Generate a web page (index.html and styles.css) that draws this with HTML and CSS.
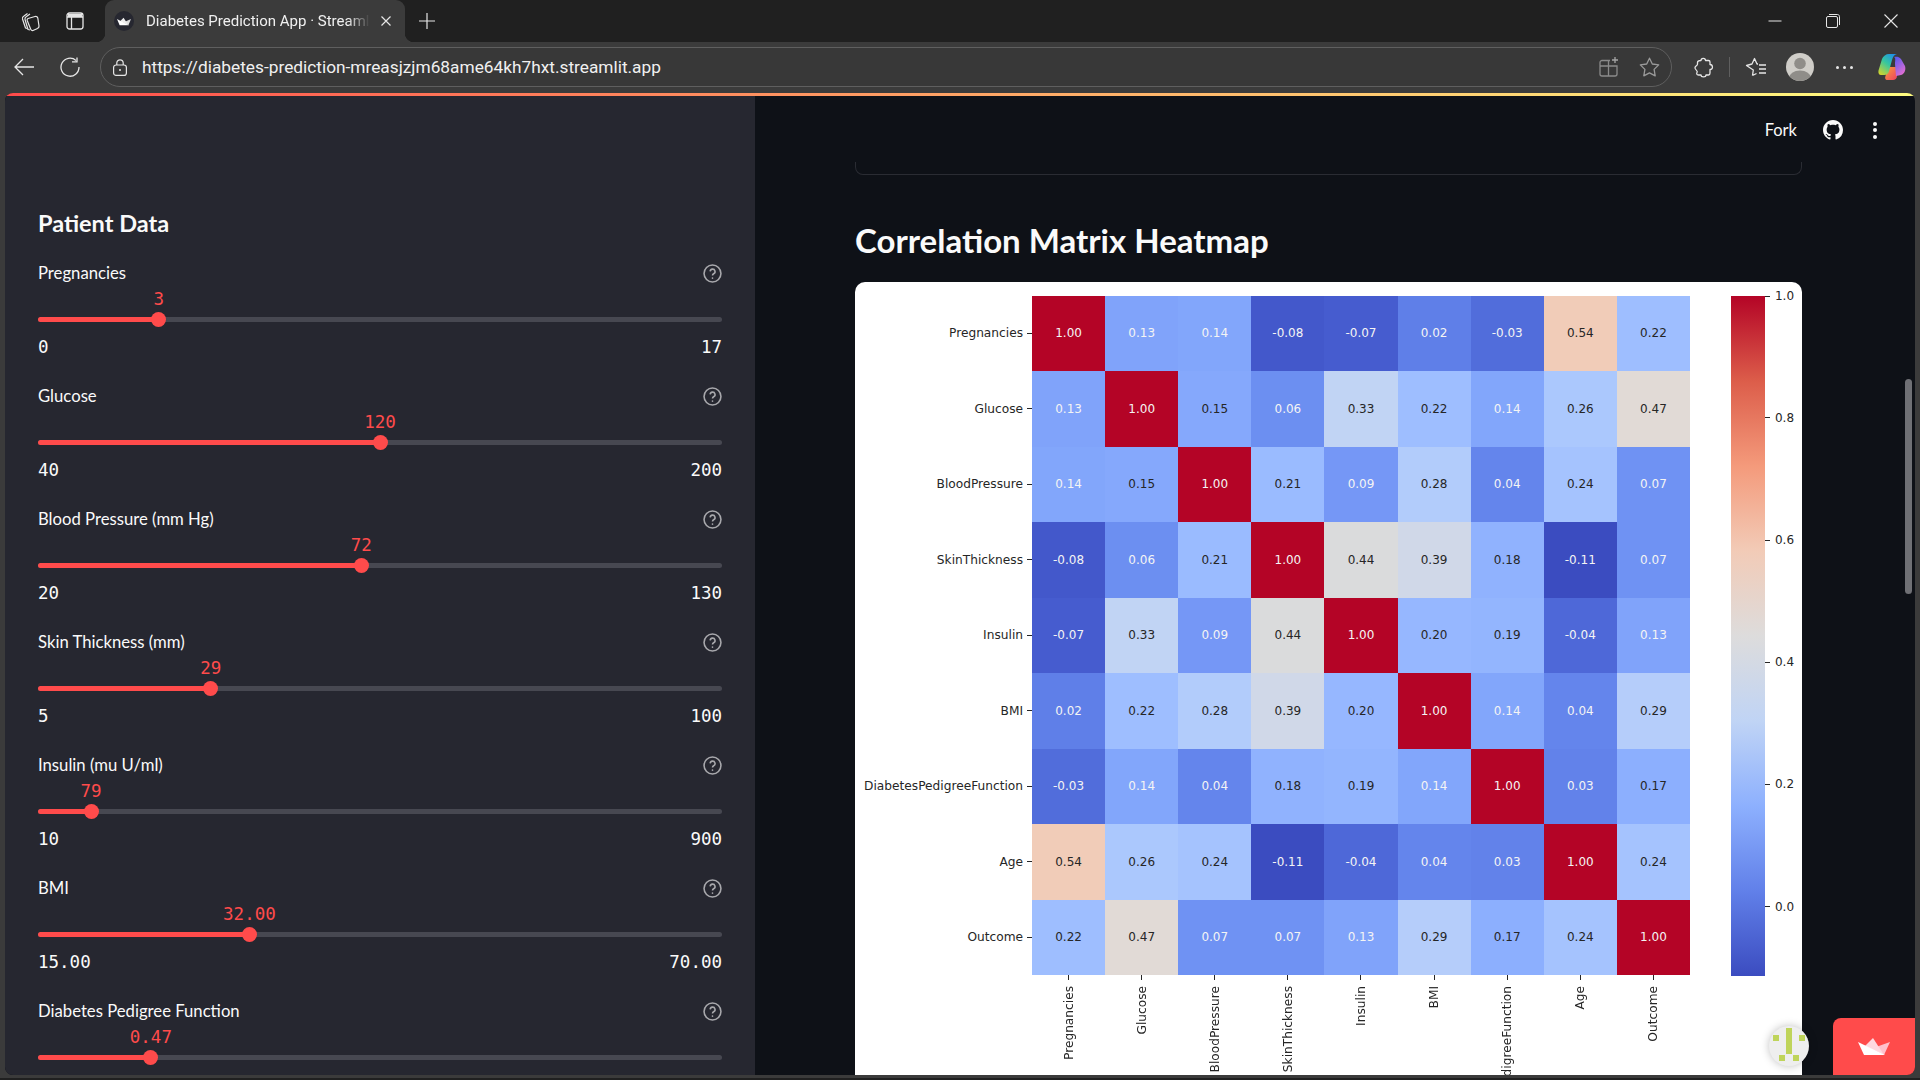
FILE: index.html
```html
<!DOCTYPE html>
<html lang="en">
<head>
	<meta charset="UTF-8">
	<title>Diabetes Prediction App · Streamlit</title>
	<link rel="stylesheet" href="styles.css">
</head>
<body>

	<!-- browser tabs -->
	<div class="tabstrip">
		<span class="chrome-icon first">
			<svg width="22" height="22" viewBox="0 0 22 22" fill="none" stroke="#e6e6e6" stroke-width="1.2" stroke-linejoin="round"><path d="M8 18.5 6.5 18 3.5 9C3 7 4 6.5 5 6L8.5 3.5"/><path d="M11 20 9 19.5 6 9.5C5.7 8 6.5 7 7.500 6.500L11 4"/><path d="M9 8.500 16 6.500C17.500 6.200 18.500 7 18.800 8L20 16C20.200 17.300 19.500 18 18.500 18.500L14 20.500C12.800 20.800 12 20.200 11.700 19.200L8.200 10.500C7.900 9.500 8.200 8.800 9 8.500Z"/></svg>
		</span>
		<span class="chrome-icon">
			<svg width="18" height="18" viewBox="0 0 18 18" fill="none" stroke="#e6e6e6" stroke-width="1.3"><rect x="1" y="1" width="16" height="16" rx="2.500"/><path d="M1 5H17M5.500 5V17"/><path d="M2 2H16V5H2Z" fill="#e6e6e6" stroke="none"/></svg>
		</span>
		<div class="tab">
			<span class="favicon">
				<svg width="14" height="9" viewBox="0 0 32 17"><path d="M32 3 26 17 18 9Z" fill="#ddd"/><path d="M15 0 26 17 7 8Z" fill="#eee"/><path d="M0 3 27 17H6Z" fill="#fff"/></svg>
			</span>
			<span class="tab-title">Diabetes Prediction App · Streamlit</span>
			<svg class="tab-close" width="10" height="10" viewBox="0 0 10 10" stroke="#e6e6e6" stroke-width="1.200"><path d="M.5.5l9 9M9.500.5l-9 9"/></svg>
		</div>
		<svg class="new-tab" width="18" height="18" viewBox="0 0 18 18" stroke="#e6e6e6" stroke-width="1.200"><path d="M9 1v16M1 9h16"/></svg>
		<div class="window-buttons">
			<svg width="14" height="14" viewBox="0 0 14 14" stroke="#e6e6e6"><path d="M.5 7h13"/></svg>
			<svg width="14" height="14" viewBox="0 0 14 14" fill="none" stroke="#e6e6e6"><rect x=".5" y="2.500" width="11" height="11" rx="1.500"/><path d="M3 .5h8.500c1 0 2 1 2 2V11"/></svg>
			<svg width="14" height="14" viewBox="0 0 14 14" stroke="#e6e6e6" stroke-width="1.100"><path d="M.5.5l13 13M13.500.5l-13 13"/></svg>
		</div>
	</div>

	<!-- address bar -->
	<div class="toolbar">
		<svg class="tool-back" width="20" height="18" viewBox="0 0 20 18" fill="none" stroke="#e6e6e6" stroke-width="1.300"><path d="M1 9H20M9 1 1 9l8 8"/></svg>
		<svg class="tool-reload" width="20" height="20" viewBox="0 0 20 20" fill="none" stroke="#e6e6e6" stroke-width="1.300"><path d="M16 3.500A9 9 0 1 0 19 10"/><path d="M12 4.800H17V.5"/></svg>
		<div class="omnibox">
			<svg class="lock" width="14" height="17" viewBox="0 0 14 17" fill="none" stroke="#e6e6e6" stroke-width="1.200"><rect x=".6" y="6" width="12.800" height="10.400" rx="2.500"/><path d="M3.800 6V4a3.200 3.200 0 0 1 6.400 0v2"/><circle cx="7" cy="11" r="1" fill="#e6e6e6" stroke="none"/></svg>
			<span class="url">https://diabetes-prediction-mreasjzjm68ame64kh7hxt.streamlit.app</span>
			<svg class="omni-split" width="20" height="20" viewBox="0 0 20 20" fill="none" stroke="#8a8a8a" stroke-width="1.300"><path d="M11 3.500H3a2 2 0 0 0-2 2V17a2 2 0 0 0 2 2h13a2 2 0 0 0 2-2V9H1M9.500 3.500V19"/><path d="M16 0v6M13 3h6" stroke="#a5a5a5"/></svg>
			<svg class="omni-star" width="21" height="20" viewBox="0 0 21 20" fill="none" stroke="#9a9a9a" stroke-width="1.300" stroke-linejoin="round"><path d="M10.500 1.200 13.300 7l6.400.9-4.600 4.500 1.100 6.400-5.700-3-5.700 3 1.100-6.400L1.300 7.900 7.700 7Z"/></svg>
		</div>
		<svg class="tool-puzzle" width="20" height="21" viewBox="0 0 20 21" fill="none" stroke="#e6e6e6" stroke-width="1.300" stroke-linejoin="round"><path d="M7 3.500C7 1 11.500.500 11.500 3.500H14.500C15.500 3.500 16 4 16 5V7.500C19 7.500 19.500 12.500 16 12.500V16C16 17 15.500 18 14.500 18H12C12 20.500 7 20.500 7 18H4.500C2.500 18 2.500 16.500 3 15.500 4.500 13.500 .5 13 1 10.500 1.500 8.500 3.500 9 3.500 7V5.500C3.500 4 5 3.500 7 3.500Z"/></svg>
		<span class="tool-divider"></span>
		<svg class="tool-favs" width="21" height="20" viewBox="0 0 21 20" fill="none" stroke="#e6e6e6" stroke-width="1.300" stroke-linejoin="round"><path d="M7.500 18.500 8.300 13 1.500 8.500 7 7 9.500 1.500 12 7H13M7.500 18.500 11.500 16.500"/><path d="M14 8h7M14 12h7M14 16h7"/></svg>
		<svg class="tool-avatar" width="28" height="28" viewBox="0 0 28 28"><clipPath id="avatar-clip"><circle cx="14" cy="14" r="14"/></clipPath><g clip-path="url(#avatar-clip)"><rect width="28" height="28" fill="#cfcdc8"/><circle cx="14" cy="10.500" r="5.800" fill="#8f8d89"/><ellipse cx="14" cy="25" rx="11" ry="7.500" fill="#8f8d89"/></g></svg>
		<span class="tool-dots"><i></i><i></i><i></i></span>
		<svg class="tool-copilot" width="28" height="28" viewBox="0 0 28 28">
			<defs>
				<linearGradient id="cop-left" x1="0.800" y1="0" x2="0.100" y2="1"><stop offset="0" stop-color="#1f8fe8"/><stop offset=".45" stop-color="#35c6a0"/><stop offset="1" stop-color="#d6d52a"/></linearGradient>
				<linearGradient id="cop-right" x1="0.200" y1="0" x2="0.800" y2="1"><stop offset="0" stop-color="#5b5bf0"/><stop offset="1" stop-color="#ec6fd0"/></linearGradient>
				<linearGradient id="cop-low" x1="0" y1="0" x2="1" y2="1"><stop offset="0" stop-color="#f7a23a"/><stop offset="1" stop-color="#ee3f62"/></linearGradient>
			</defs>
			<path d="M10 14H18L19 23C19 25.500 17 27 15 27H9C7.500 27 6.500 25 7.500 23Z" fill="url(#cop-low)"/>
			<path d="M16 4C18 3.500 21 3.500 23 6L27 13C28 16 27 21 23 22L18 23 17 11C17 8 18 5 16 4Z" fill="url(#cop-right)"/>
			<path d="M11 1H19C16 1.500 15 4 14 7L11 18C10.500 20.500 8.500 22 6.500 22H3C1 22 0 20 .5 17.500L4 6C5 3 8 1 11 1Z" fill="url(#cop-left)"/>
		</svg>
	</div>

	<!-- streamlit app -->
	<div class="app-frame">
		<div class="app">
			<div class="decoration"></div>
			<div class="app-body">

				<aside class="sidebar">
					<h2 class="sidebar-title">Patient Data</h2>

					<div class="slider">
						<div class="slider-label"><span>Pregnancies</span><svg class="help" viewBox="0 0 18 18"><circle cx="9" cy="9" r="8"/><path d="M6.800 7a2.300 2.300 0 1 1 3.300 2.200C9.300 9.700 9 10 9 11"/><circle class="help-dot" cx="9" cy="13.300" r=".8"/></svg></div>
						<div class="track"><div class="fill" style="width:17.65%"><span class="thumb"><span class="thumb-value">3</span></span></div></div>
						<div class="slider-range"><span>0</span><span>17</span></div>
					</div>

					<div class="slider">
						<div class="slider-label"><span>Glucose</span><svg class="help" viewBox="0 0 18 18"><circle cx="9" cy="9" r="8"/><path d="M6.800 7a2.300 2.300 0 1 1 3.300 2.200C9.300 9.700 9 10 9 11"/><circle class="help-dot" cx="9" cy="13.300" r=".8"/></svg></div>
						<div class="track"><div class="fill" style="width:50%"><span class="thumb"><span class="thumb-value">120</span></span></div></div>
						<div class="slider-range"><span>40</span><span>200</span></div>
					</div>

					<div class="slider">
						<div class="slider-label"><span>Blood Pressure (mm Hg)</span><svg class="help" viewBox="0 0 18 18"><circle cx="9" cy="9" r="8"/><path d="M6.800 7a2.300 2.300 0 1 1 3.300 2.200C9.300 9.700 9 10 9 11"/><circle class="help-dot" cx="9" cy="13.300" r=".8"/></svg></div>
						<div class="track"><div class="fill" style="width:47.27%"><span class="thumb"><span class="thumb-value">72</span></span></div></div>
						<div class="slider-range"><span>20</span><span>130</span></div>
					</div>

					<div class="slider">
						<div class="slider-label"><span>Skin Thickness (mm)</span><svg class="help" viewBox="0 0 18 18"><circle cx="9" cy="9" r="8"/><path d="M6.800 7a2.300 2.300 0 1 1 3.300 2.200C9.300 9.700 9 10 9 11"/><circle class="help-dot" cx="9" cy="13.300" r=".8"/></svg></div>
						<div class="track"><div class="fill" style="width:25.26%"><span class="thumb"><span class="thumb-value">29</span></span></div></div>
						<div class="slider-range"><span>5</span><span>100</span></div>
					</div>

					<div class="slider">
						<div class="slider-label"><span>Insulin (mu U/ml)</span><svg class="help" viewBox="0 0 18 18"><circle cx="9" cy="9" r="8"/><path d="M6.800 7a2.300 2.300 0 1 1 3.300 2.200C9.300 9.700 9 10 9 11"/><circle class="help-dot" cx="9" cy="13.300" r=".8"/></svg></div>
						<div class="track"><div class="fill" style="width:7.75%"><span class="thumb"><span class="thumb-value">79</span></span></div></div>
						<div class="slider-range"><span>10</span><span>900</span></div>
					</div>

					<div class="slider">
						<div class="slider-label"><span>BMI</span><svg class="help" viewBox="0 0 18 18"><circle cx="9" cy="9" r="8"/><path d="M6.800 7a2.300 2.300 0 1 1 3.300 2.200C9.300 9.700 9 10 9 11"/><circle class="help-dot" cx="9" cy="13.300" r=".8"/></svg></div>
						<div class="track"><div class="fill" style="width:30.91%"><span class="thumb"><span class="thumb-value">32.00</span></span></div></div>
						<div class="slider-range"><span>15.00</span><span>70.00</span></div>
					</div>

					<div class="slider">
						<div class="slider-label"><span>Diabetes Pedigree Function</span><svg class="help" viewBox="0 0 18 18"><circle cx="9" cy="9" r="8"/><path d="M6.800 7a2.300 2.300 0 1 1 3.300 2.200C9.300 9.700 9 10 9 11"/><circle class="help-dot" cx="9" cy="13.300" r=".8"/></svg></div>
						<div class="track"><div class="fill" style="width:16.5%"><span class="thumb"><span class="thumb-value">0.47</span></span></div></div>
					</div>
				</aside>

				<main class="main">
					<div class="prev-card"></div>
					<h2 class="main-title">Correlation Matrix Heatmap</h2>

					<div class="chart">
						<div class="heatmap">
							<div class="ylabel">Pregnancies</div>
							<div class="cell v100">1.00</div><div class="cell v013">0.13</div><div class="cell v014">0.14</div><div class="cell n008">-0.08</div><div class="cell n007">-0.07</div><div class="cell v002">0.02</div><div class="cell n003">-0.03</div><div class="cell v054">0.54</div><div class="cell v022">0.22</div>
							<div class="ylabel">Glucose</div>
							<div class="cell v013">0.13</div><div class="cell v100">1.00</div><div class="cell v015">0.15</div><div class="cell v006">0.06</div><div class="cell v033">0.33</div><div class="cell v022">0.22</div><div class="cell v014">0.14</div><div class="cell v026">0.26</div><div class="cell v047">0.47</div>
							<div class="ylabel">BloodPressure</div>
							<div class="cell v014">0.14</div><div class="cell v015">0.15</div><div class="cell v100">1.00</div><div class="cell v021">0.21</div><div class="cell v009">0.09</div><div class="cell v028">0.28</div><div class="cell v004">0.04</div><div class="cell v024">0.24</div><div class="cell v007">0.07</div>
							<div class="ylabel">SkinThickness</div>
							<div class="cell n008">-0.08</div><div class="cell v006">0.06</div><div class="cell v021">0.21</div><div class="cell v100">1.00</div><div class="cell v044">0.44</div><div class="cell v039">0.39</div><div class="cell v018">0.18</div><div class="cell n011">-0.11</div><div class="cell v007">0.07</div>
							<div class="ylabel">Insulin</div>
							<div class="cell n007">-0.07</div><div class="cell v033">0.33</div><div class="cell v009">0.09</div><div class="cell v044">0.44</div><div class="cell v100">1.00</div><div class="cell v020">0.20</div><div class="cell v019">0.19</div><div class="cell n004">-0.04</div><div class="cell v013">0.13</div>
							<div class="ylabel">BMI</div>
							<div class="cell v002">0.02</div><div class="cell v022">0.22</div><div class="cell v028">0.28</div><div class="cell v039">0.39</div><div class="cell v020">0.20</div><div class="cell v100">1.00</div><div class="cell v014">0.14</div><div class="cell v004">0.04</div><div class="cell v029">0.29</div>
							<div class="ylabel">DiabetesPedigreeFunction</div>
							<div class="cell n003">-0.03</div><div class="cell v014">0.14</div><div class="cell v004">0.04</div><div class="cell v018">0.18</div><div class="cell v019">0.19</div><div class="cell v014">0.14</div><div class="cell v100">1.00</div><div class="cell v003">0.03</div><div class="cell v017">0.17</div>
							<div class="ylabel">Age</div>
							<div class="cell v054">0.54</div><div class="cell v026">0.26</div><div class="cell v024">0.24</div><div class="cell n011">-0.11</div><div class="cell n004">-0.04</div><div class="cell v004">0.04</div><div class="cell v003">0.03</div><div class="cell v100">1.00</div><div class="cell v024">0.24</div>
							<div class="ylabel">Outcome</div>
							<div class="cell v022">0.22</div><div class="cell v047">0.47</div><div class="cell v007">0.07</div><div class="cell v007">0.07</div><div class="cell v013">0.13</div><div class="cell v029">0.29</div><div class="cell v017">0.17</div><div class="cell v024">0.24</div><div class="cell v100">1.00</div>

							<div></div>
							<div class="xlabel"><span>Pregnancies</span></div>
							<div class="xlabel"><span>Glucose</span></div>
							<div class="xlabel"><span>BloodPressure</span></div>
							<div class="xlabel"><span>SkinThickness</span></div>
							<div class="xlabel"><span>Insulin</span></div>
							<div class="xlabel"><span>BMI</span></div>
							<div class="xlabel"><span>DiabetesPedigreeFunction</span></div>
							<div class="xlabel"><span>Age</span></div>
							<div class="xlabel"><span>Outcome</span></div>
						</div>

						<div class="colorbar">
							<span class="cb-tick" style="top:0.5px">1.0</span>
							<span class="cb-tick" style="top:122px">0.8</span>
							<span class="cb-tick" style="top:244.5px">0.6</span>
							<span class="cb-tick" style="top:366.5px">0.4</span>
							<span class="cb-tick" style="top:488.5px">0.2</span>
							<span class="cb-tick" style="top:611px">0.0</span>
						</div>
					</div>
				</main>

			</div>

			<!-- things that float over the app -->
			<div class="st-header">
				<span class="fork">Fork</span>
				<svg class="github" width="20" height="20" viewBox="0 0 16 16" fill="#fafafa"><path d="M8 0C3.58 0 0 3.58 0 8c0 3.54 2.29 6.53 5.47 7.59.4.07.55-.17.55-.38 0-.19-.01-.82-.01-1.49-2.01.37-2.53-.49-2.69-.94-.09-.23-.48-.94-.82-1.13-.28-.15-.68-.52-.01-.53.63-.01 1.08.58 1.23.82.72 1.21 1.87.87 2.33.66.07-.52.28-.87.51-1.07-1.78-.2-3.64-.89-3.64-3.95 0-.87.31-1.59.82-2.15-.08-.2-.36-1.02.08-2.12 0 0 .67-.21 2.2.82.64-.18 1.32-.27 2-.27.68 0 1.36.09 2 .27 1.53-1.04 2.2-.82 2.2-.82.44 1.1.16 1.92.08 2.12.51.56.82 1.27.82 2.15 0 3.07-1.87 3.75-3.65 3.95.29.25.54.73.54 1.48 0 1.07-.01 1.93-.01 2.2 0 .21.15.46.55.38A8.013 8.013 0 0016 8c0-4.42-3.58-8-8-8z"/></svg>
				<span class="kebab"><i></i><i></i><i></i></span>
			</div>
			<div class="scrollbar"></div>
			<div class="viewer-badge">
				<svg width="40" height="40" viewBox="0 0 40 40" fill="#bfd45a"><rect x="17" y="2" width="6" height="26"/><rect x="4" y="9" width="6" height="6"/><rect x="30" y="9" width="6" height="6"/><rect x="10" y="29" width="6" height="6"/><rect x="24" y="29" width="6" height="6"/></svg>
			</div>
			<div class="hosted">
				<svg width="32" height="17" viewBox="0 0 32 17"><path d="M32 4 26 17 18 9Z" fill="#ffc0cc"/><path d="M15 0 26 17 7 8Z" fill="#ffd9e0"/><path d="M0 4 27 17H6Z" fill="#fff"/></svg>
			</div>
		</div>
	</div>
	<div class="window-bottom"></div>

</body>
</html>
```

FILE: styles.css
```css
html, body {
	margin: 0;
	padding: 0;
	height: 100%;
	overflow: hidden;
	background: #3b3b3b;
}

body {
	display: flex;
	flex-direction: column;
	font-family: "Roboto", "Liberation Sans", sans-serif;
}

/* Browser tabs */

.tabstrip {
	display: flex;
	align-items: center;
	height: 42px;
	flex: none;
	background: #202020;
}

.chrome-icon {
	display: flex;
	width: 22px;
	height: 22px;
	align-items: center;
	justify-content: center;
	margin-left: 23px;
}

.chrome-icon.first {
	margin-left: 19px;
}

.tab {
	position: relative;
	display: flex;
	align-items: center;
	align-self: stretch;
	width: 300px;
	margin-left: 19px;
	padding-left: 9px;
	box-sizing: border-box;
	background: #3b3b3b;
	border-top-left-radius: 9px;
	border-top-right-radius: 9px;
}

.tab::before,
.tab::after {
	content: "";
	position: absolute;
	bottom: 0;
	width: 9px;
	height: 9px;
}

.tab::before {
	left: -9px;
	background: radial-gradient(circle at 0 0, transparent 9px, #3b3b3b 9.5px);
}

.tab::after {
	right: -9px;
	background: radial-gradient(circle at 100% 0, transparent 9px, #3b3b3b 9.5px);
}

.favicon {
	display: flex;
	width: 20px;
	height: 20px;
	align-items: center;
	justify-content: center;
	border-radius: 50%;
	background: #262730;
	flex: none;
}

.tab-title {
	width: 224px;
	margin-left: 12px;
	overflow: hidden;
	white-space: nowrap;
	font-size: 15px;
	color: #f0f0f0;
	-webkit-mask-image: linear-gradient(90deg, #000 90%, transparent);
	mask-image: linear-gradient(90deg, #000 90%, transparent);
}

.tab-close {
	margin-left: 11px;
}

.new-tab {
	margin-left: 13px;
}

.window-buttons {
	display: flex;
	gap: 44px;
	margin-left: auto;
	margin-right: 22px;
}

/* Address bar */

.toolbar {
	display: flex;
	align-items: center;
	height: 51px;
	flex: none;
	background: #3b3b3b;
	padding-bottom: 1px;
	box-sizing: border-box;
}

.tool-back {
	margin-left: 14px;
}

.tool-reload {
	margin-left: 26px;
}

.omnibox {
	display: flex;
	align-items: center;
	width: 1572px;
	height: 40px;
	margin-left: 20px;
	box-sizing: border-box;
	border: 1px solid #5f5f5f;
	border-radius: 20px;
	background: #383838;
}

.lock {
	margin-left: 12px;
}

.url {
	margin-left: 15px;
	font-size: 17.3px;
	color: #f0f0f0;
	white-space: nowrap;
}

.omni-split {
	margin-left: auto;
}

.omni-star {
	margin-left: 20px;
	margin-right: 11px;
}

.tool-puzzle {
	margin-left: 22px;
}

.tool-divider {
	width: 1px;
	height: 20px;
	margin-left: 15px;
	background: #5f5f5f;
}

.tool-favs {
	margin-left: 15px;
}

.tool-avatar {
	margin-left: 20px;
}

.tool-dots {
	display: flex;
	gap: 4px;
	margin-left: 22px;
}

.tool-dots i {
	width: 3px;
	height: 3px;
	border-radius: 50%;
	background: #e6e6e6;
}

.tool-copilot {
	margin-left: 25px;
}

/* The app itself */

.app-frame {
	flex: 1;
	min-height: 0;
	padding: 0 5px 3px 5px;
}

.app {
	position: relative;
	display: flex;
	flex-direction: column;
	height: 100%;
	overflow: hidden;
	border-radius: 8px;
	background: #0e1117;
}

.window-bottom {
	height: 2px;
	flex: none;
	background: #202020;
}

.decoration {
	height: 3px;
	flex: none;
	background: linear-gradient(90deg, rgb(255, 75, 75), rgb(255, 253, 128));
}

.app-body {
	display: flex;
	flex: 1;
	min-height: 0;
}

/* Sidebar */

.sidebar {
	width: 750px;
	flex: none;
	box-sizing: border-box;
	padding: 111px 33px 0;
	overflow: hidden;
	background: #262730;
	color: #fafafa;
	font-family: "Lato", "Noto Sans", sans-serif;
}

.sidebar-title {
	margin: 0 0 22px;
	font-size: 23.5px;
	font-weight: 700;
	line-height: 32px;
}

.slider {
	height: 123px;
	box-sizing: border-box;
}

.slider-label {
	display: flex;
	align-items: center;
	justify-content: space-between;
	height: 24px;
	font-size: 16.7px;
	margin-bottom: 32px;
}

.help {
	width: 19px;
	height: 19px;
	fill: none;
	stroke: #a8a8ac;
	stroke-width: 1.500;
}

.help-dot {
	fill: #a8a8ac;
	stroke: none;
}

.track {
	height: 5px;
	border-radius: 3px;
	background: #474851;
}

.fill {
	position: relative;
	height: 100%;
	border-radius: 3px;
	background: #ff4b4b;
}

.thumb {
	position: absolute;
	right: -7.5px;
	top: -5px;
	width: 15px;
	height: 15px;
	border-radius: 50%;
	background: #ff4b4b;
}

.thumb-value {
	position: absolute;
	left: 50%;
	bottom: 17px;
	transform: translateX(-50%);
	font: 17.5px/22px "DejaVu Sans Mono", monospace;
	color: #ff4b4b;
}

.slider-range {
	display: flex;
	justify-content: space-between;
	margin-top: 14px;
	font: 17.5px/22px "DejaVu Sans Mono", monospace;
}

/* Main column */

.main {
	flex: 1;
	min-width: 0;
	padding: 66px 113px 0 100px;
	overflow: hidden;
}

.prev-card {
	height: 12px;
	border: 1px solid #2a2c33;
	border-top: none;
	border-radius: 0 0 8px 8px;
}

.main-title {
	margin: 42px 0 0;
	font-size: 33px;
	font-weight: 700;
	line-height: 46px;
	color: #fafafa;
	font-family: "Lato", "Noto Sans", sans-serif;
}

.chart {
	display: flex;
	align-items: flex-start;
	margin-top: 19px;
	padding-top: 13.5px;
	border-radius: 10px;
	background: #fff;
	font-family: "DejaVu Sans", sans-serif;
	color: #262626;
}

.heatmap {
	display: grid;
	grid-template-columns: 177px repeat(9, 73.12px);
	grid-template-rows: repeat(9, 75.5px) auto;
}

.ylabel {
	display: flex;
	align-items: center;
	justify-content: flex-end;
	font-size: 12.2px;
	white-space: nowrap;
}

.ylabel::after {
	content: "";
	width: 5px;
	height: 1px;
	margin-left: 4px;
	background: #262626;
}

.xlabel {
	display: flex;
	flex-direction: column;
	align-items: center;
	height: 240px;
	font-size: 12.2px;
}

.xlabel::before {
	content: "";
	width: 1px;
	height: 5px;
	margin-bottom: 6px;
	background: #262626;
}

.xlabel span {
	writing-mode: vertical-rl;
	transform: rotate(180deg);
	white-space: nowrap;
}

.cell {
	display: flex;
	align-items: center;
	justify-content: center;
	font-size: 12px;
	color: #262626;
}

/* Cell colours, named after the value they show */

.n011, .n008, .n007, .n004, .n003, .v002, .v003, .v004, .v006, .v007, .v009,
.v013, .v014, .v100 {
	color: #f4f4f4;
}

.n011 { background: #3b4cc0; }
.n008 { background: #4358cb; }
.n007 { background: #465ccf; }
.n004 { background: #4e68d8; }
.n003 { background: #516ddb; }
.v002 { background: #5f7fe8; }
.v003 { background: #6282ea; }
.v004 { background: #6485ec; }
.v006 { background: #6c8ff1; }
.v007 { background: #6f92f3; }
.v009 { background: #7597f6; }
.v013 { background: #80a3fa; }
.v014 { background: #82a6fb; }
.v015 { background: #85a8fc; }
.v017 { background: #8caffe; }
.v018 { background: #90b2fe; }
.v019 { background: #93b5fe; }
.v020 { background: #96b7ff; }
.v021 { background: #9abbff; }
.v022 { background: #9ebeff; }
.v024 { background: #a5c3fe; }
.v026 { background: #abc8fd; }
.v028 { background: #b2ccfb; }
.v029 { background: #b5cdfa; }
.v033 { background: #c1d4f4; }
.v039 { background: #d0d8e8; }
.v044 { background: #dadbdc; }
.v047 { background: #e1dad6; }
.v054 { background: #f1ccb8; }
.v100 { background: #b40426; }

.colorbar {
	position: relative;
	width: 34px;
	height: 680px;
	margin-left: 41px;
	background: linear-gradient(0deg, #3b4cc0, #6180e9 12.5%, #8db0fe 25%, #c0d4f5 37.5%, #dddcdc 50%, #f2cbb7 62.5%, #f49a7b 75%, #dc5d4a 87.5%, #b40426);
}

.cb-tick {
	position: absolute;
	left: 34px;
	display: flex;
	align-items: center;
	height: 14px;
	margin-top: -7px;
	font-size: 12px;
	line-height: 14px;
}

.cb-tick::before {
	content: "";
	width: 5px;
	height: 1px;
	margin-right: 5px;
	background: #262626;
}

/* Overlays */

.st-header {
	position: absolute;
	top: 3px;
	right: 0;
	display: flex;
	align-items: center;
	height: 68px;
	padding-right: 38px;
	color: #fafafa;
	font-family: "Lato", "Noto Sans", sans-serif;
}

.fork {
	font-size: 16.5px;
}

.github {
	margin-left: 26px;
}

.kebab {
	display: flex;
	flex-direction: column;
	gap: 2.500px;
	margin-left: 30px;
}

.kebab i {
	width: 4px;
	height: 4px;
	border-radius: 50%;
	background: #fafafa;
}

.scrollbar {
	position: absolute;
	top: 286px;
	right: 3px;
	width: 7px;
	height: 215px;
	border-radius: 4px;
	background: #6f7075;
}

.viewer-badge {
	position: absolute;
	left: 1764px;
	bottom: 9px;
	width: 40px;
	height: 40px;
	border-radius: 50%;
	background: #eee;
	box-shadow: 0 0 8px rgba(0, 0, 0, 0.25);
}

.hosted {
	position: absolute;
	right: 0;
	bottom: 0;
	display: flex;
	align-items: center;
	justify-content: center;
	width: 82px;
	height: 57px;
	border-top-left-radius: 8px;
	background: #ff4b4b;
}
```
